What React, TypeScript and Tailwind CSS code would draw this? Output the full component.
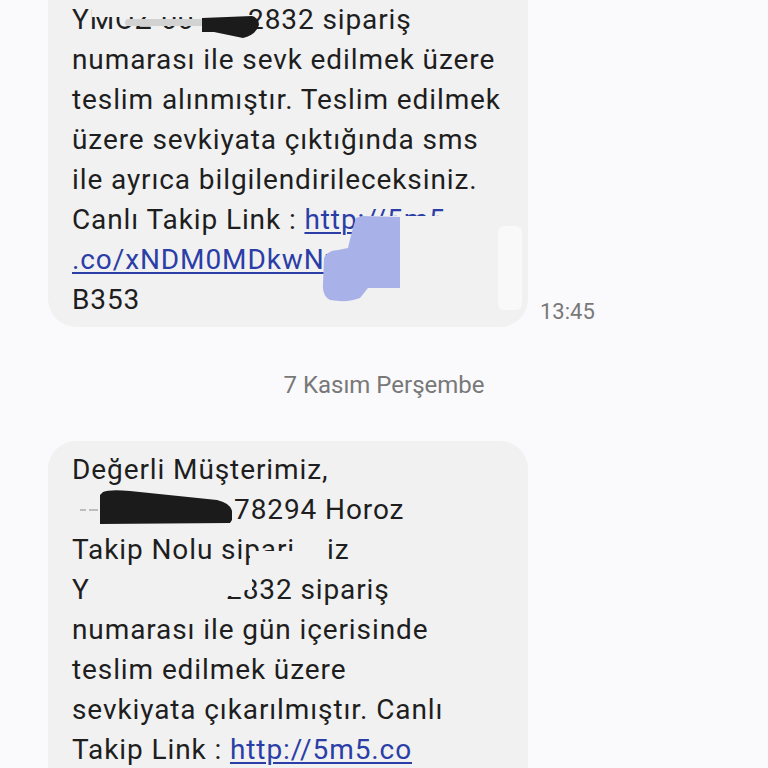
const line = 'h-10 leading-10 whitespace-nowrap'
const link = 'text-[#2b3ea8] underline decoration-[1.5px] underline-offset-[3px]'

export default function App() {
  return (
    <div className="min-h-[768px] w-[768px] overflow-hidden bg-[#fafafc] font-['Roboto',sans-serif] text-[28px] tracking-[0.9px] text-[#1e1e1e]">
      {/* first message, top cut off */}
      <div className="flex items-end gap-3 pl-12">
        <div className="relative w-[480px] rounded-b-[28px] bg-[#f1f1f1] pb-[7px] pl-6">
          <div className={line}>
            <span className="inline-block w-[176px] align-top">YMOZ-00</span>
            <span>2832 sipariş</span>
          </div>
          <div className={line}>numarası ile sevk edilmek üzere</div>
          <div className={line}>teslim alınmıştır. Teslim edilmek</div>
          <div className={line}>üzere sevkiyata çıktığında sms</div>
          <div className={line}>ile ayrıca bilgilendirileceksiniz.</div>
          <div className={line}>
            Canlı Takip Link : <span className={link}>http://5m5</span>
          </div>
          <div className={line}>
            <span className={link}>.co/xNDM0MDkwNz</span>
          </div>
          <div className={line}>B353</div>

          {/* redactions */}
          <div className="absolute left-[44px] top-0 h-[17px] w-[113px] bg-[#f1f1f1]" />
          <div className="absolute left-[77px] top-[19px] h-[7px] w-[80px] rounded-sm bg-[#d2d2d2]" />
          <svg className="absolute left-[154px] top-[14px]" width="58" height="26" viewBox="0 0 58 26">
            <path d="M0 4 L50 2 Q57 4 57 11 Q54 21 41 24 L12 18 L0 18 Z" fill="#1b1b1b" />
          </svg>
          <div className="absolute left-[320px] top-[216px] h-[26px] w-[94px] bg-[#f1f1f1]" />
          <svg className="absolute left-[270px] top-[208px]" width="84" height="96" viewBox="0 0 84 96">
            <path
              d="M38 10 L44 8 L82 9 L82 80 L50 80 L42 90 Q30 95 12 92 Q4 88 5 76 L6 50 Q10 42 20 42 L30 40 Q34 22 38 10 Z"
              fill="#a9b2e8"
            />
          </svg>
          <div className="absolute left-[450px] top-[226px] h-[84px] w-[24px] rounded-md bg-[#f9f9f9]" />
        </div>
        <span className="mb-[3px] text-[22px] leading-6 tracking-normal text-[#787878]">13:45</span>
      </div>

      <div className="mt-[43px] text-center text-[24px] leading-[30px] tracking-normal text-[#787878]">7 Kasım Perşembe</div>

      {/* second message */}
      <div className="mt-[41px] pl-12">
        <div className="relative w-[480px] rounded-t-[28px] bg-[#f1f1f1] pl-6 pt-[9px]">
          <div className={line}>Değerli Müşterimiz,</div>
          <div className={`${line} flex items-center`}>
            <span className="flex w-[28px] gap-[3px] pl-2">
              <span className="h-[2px] w-[6px] bg-[#bdbdbd]" />
              <span className="h-[2px] w-[9px] bg-[#bdbdbd]" />
            </span>
            <svg className="-mt-[6px]" width="134" height="37" viewBox="0 0 134 37">
              <path d="M3 3 Q10 0 30 2 L117 11 Q130 14 132 22 L132 31 L130 34 L0 35 L0 6 Z" fill="#1b1b1b" />
            </svg>
            <span>78294 Horoz</span>
          </div>
          <div className={line}>
            <span className="inline-block w-[255px] align-top">Takip Nolu sipari</span>
            iz
          </div>
          <div className={line}>
            <span className="inline-block w-[154px] align-top">Y</span>
            2832 sipariş
          </div>
          <div className={line}>numarası ile gün içerisinde</div>
          <div className={line}>teslim edilmek üzere</div>
          <div className={line}>sevkiyata çıkarılmıştır. Canlı</div>
          <div className={line}>
            Takip Link : <span className={link}>http://5m5.co</span>
          </div>

          {/* redactions */}
          <div className="absolute left-[202px] top-[110px] h-[22px] w-[66px] bg-[#f1f1f1]" />
          <div className="absolute left-[174px] top-[134px] h-[21px] w-[22px] bg-[#f1f1f1]" />
          <div className="absolute left-[196px] top-[134px] h-[15px] w-[8px] bg-[#f1f1f1]" />
        </div>
      </div>
    </div>
  )
}
